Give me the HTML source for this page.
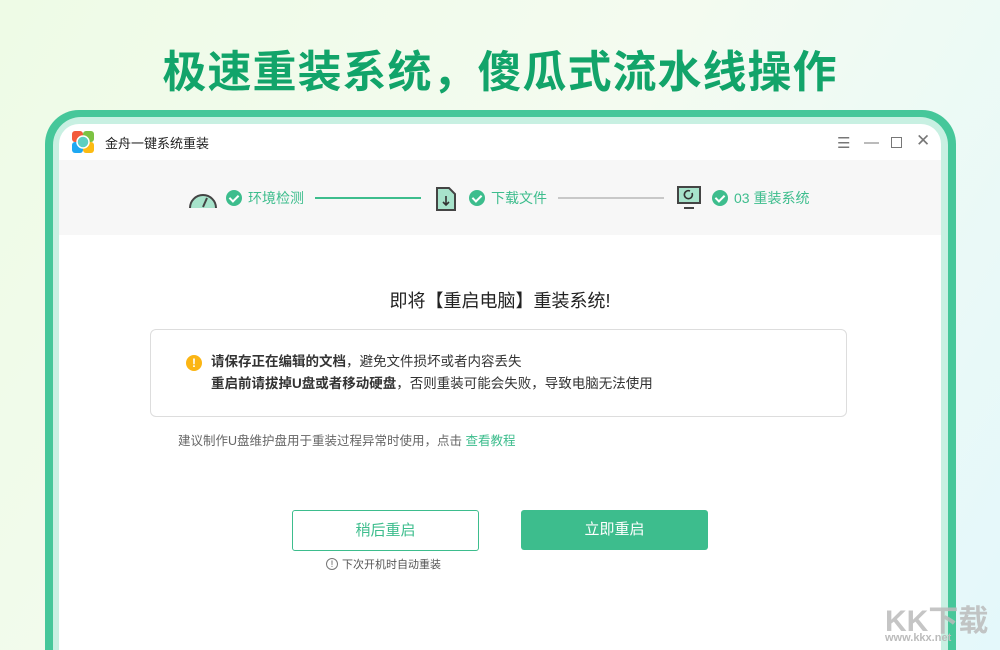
<!DOCTYPE html>
<html><head><meta charset="utf-8"><style>
*{margin:0;padding:0;box-sizing:border-box}
html,body{width:1000px;height:650px;overflow:hidden}
body{font-family:"Liberation Sans","Noto Sans CJK SC",sans-serif;background:linear-gradient(120deg,#eefbe6 0%,#f4fbf0 50%,#e4f8fb 100%);position:relative}
.h1{position:absolute;top:36px;left:0;width:1000px;text-align:center;font-size:44px;font-weight:bold;color:#12a46a;letter-spacing:1px}
.frame{position:absolute;left:45px;top:110px;width:911px;height:540px;border-radius:34px 34px 0 0;background:#46c79a}
.band{position:absolute;left:8px;top:7px;right:8px;bottom:0;border-radius:28px 28px 0 0;background:#c8f0e2}
.win{position:absolute;left:59px;top:124px;width:882px;height:526px;background:#fff;border-radius:20px 20px 0 0;overflow:hidden}
.title{height:36px;display:flex;align-items:center;padding-left:13px;font-size:13px;color:#222}
.steps{height:75px;background:#f7f7f7;position:relative;font-size:14px;color:#3dbd8d}
.s{position:absolute;top:28px;display:flex;align-items:center;gap:6px}
.chk{width:16px;height:16px;border-radius:50%;background:#3dbd8d;display:inline-block;position:relative}
.chk:after{content:"";position:absolute;left:5px;top:3px;width:4px;height:7px;border:solid #fff;border-width:0 2px 2px 0;transform:rotate(45deg)}
.line{position:absolute;top:37px;height:2px}
.ctrl{position:absolute;top:10px;font-size:15px;color:#777}
</style></head><body>
<div class="h1">极速重装系统，傻瓜式流水线操作</div>
<div class="frame"><div class="band"></div></div>
<div class="win">
 <div class="title">
  <svg width="22" height="22" viewBox="0 0 22 22"><rect x="0" y="0" width="11" height="11" rx="3" fill="#f25b3a"/><rect x="11" y="0" width="11" height="11" rx="3" fill="#7dc242"/><rect x="0" y="11" width="11" height="11" rx="3" fill="#1ea8f2"/><rect x="11" y="11" width="11" height="11" rx="3" fill="#fcbb12"/><circle cx="11" cy="11" r="6" fill="#5dcfc0" stroke="#fff" stroke-width="1.5"/></svg>
  <span style="margin-left:11px">金舟一键系统重装</span>
  <span class="ctrl" style="left:778px">☰</span><span class="ctrl" style="left:805px">—</span>
  <span class="ctrl" style="left:832px;width:11px;height:11px;border:1.5px solid #777;top:13px"></span>
  <span class="ctrl" style="left:857px;font-size:17px;top:7px">✕</span>
 </div>
 <div class="steps">
  <svg style="position:absolute;left:129px;top:28px" width="30" height="20" viewBox="0 0 30 20"><path d="M2 20 A13 13 0 0 1 28 20" fill="#a7e3cb" stroke="#444" stroke-width="2"/><path d="M15 19 L19 10" stroke="#444" stroke-width="2"/></svg>
  <div class="s" style="left:167px"><span class="chk"></span>环境检测</div>
  <div class="line" style="left:256px;width:106px;background:#3dbd8d"></div>
  <svg style="position:absolute;left:376px;top:26px" width="22" height="26" viewBox="0 0 22 26"><path d="M2 2h12l6 6v16H2z" fill="#a7e3cb" stroke="#444" stroke-width="2"/><path d="M11 10v9M8 16l3 3 3-3" stroke="#333" stroke-width="1.6" fill="none"/></svg>
  <div class="s" style="left:410px"><span class="chk"></span>下载文件</div>
  <div class="line" style="left:499px;width:106px;background:#c8c8c8"></div>
  <svg style="position:absolute;left:618px;top:26px" width="24" height="25" viewBox="0 0 24 25"><rect x="1" y="1" width="22" height="16" fill="#a7e3cb" stroke="#444" stroke-width="2"/><path d="M15 7a4 4 0 1 1-2-2" stroke="#333" stroke-width="1.6" fill="none"/><path d="M7 22h10" stroke="#444" stroke-width="2"/></svg>
  <div class="s" style="left:653px"><span class="chk"></span>03 重装系统</div>
 </div>
 <div style="position:absolute;top:163px;width:100%;text-align:center;font-size:18px;color:#222">即将【重启电脑】重装系统!</div>
 <div style="position:absolute;left:91px;top:205px;width:697px;height:88px;border:1px solid #ddd;border-radius:6px;font-size:13.5px;color:#333;line-height:22px;padding:21px 0 0 60px">
  <span style="position:absolute;left:35px;top:25px;width:16px;height:16px;border-radius:50%;background:#fbb514;color:#fff;font-size:12px;font-weight:bold;text-align:center;line-height:16px">!</span>
  <b>请保存正在编辑的文档</b>，避免文件损坏或者内容丢失<br><b>重启前请拔掉U盘或者移动硬盘</b>，否则重装可能会失败，导致电脑无法使用
 </div>
 <div style="position:absolute;left:119px;top:306px;font-size:12.5px;color:#666">建议制作U盘维护盘用于重装过程异常时使用，点击 <span style="color:#3dbd8d">查看教程</span></div>
 <div style="position:absolute;left:233px;top:386px;width:187px;height:41px;border:1px solid #3dbd8d;border-radius:3px;color:#3dbd8d;font-size:15px;text-align:center;line-height:39px">稍后重启</div>
 <div style="position:absolute;left:462px;top:386px;width:187px;height:40px;background:#3dbd8d;border-radius:3px;color:#fff;font-size:15px;text-align:center;line-height:40px">立即重启</div>
 <div style="position:absolute;left:267px;top:432px;font-size:11px;color:#555;display:flex;align-items:center;gap:4px"><span style="width:12px;height:12px;border:1px solid #777;border-radius:50%;font-size:9px;text-align:center;line-height:10px">!</span>下次开机时自动重装</div>
</div>
<div style="position:absolute;left:885px;top:596px;font-size:30px;font-weight:bold;color:#bbb;opacity:.85">KK下载</div>
<div style="position:absolute;left:885px;top:632px;font-size:11px;font-weight:bold;color:#bbb">www.kkx.net</div>
</body></html>
